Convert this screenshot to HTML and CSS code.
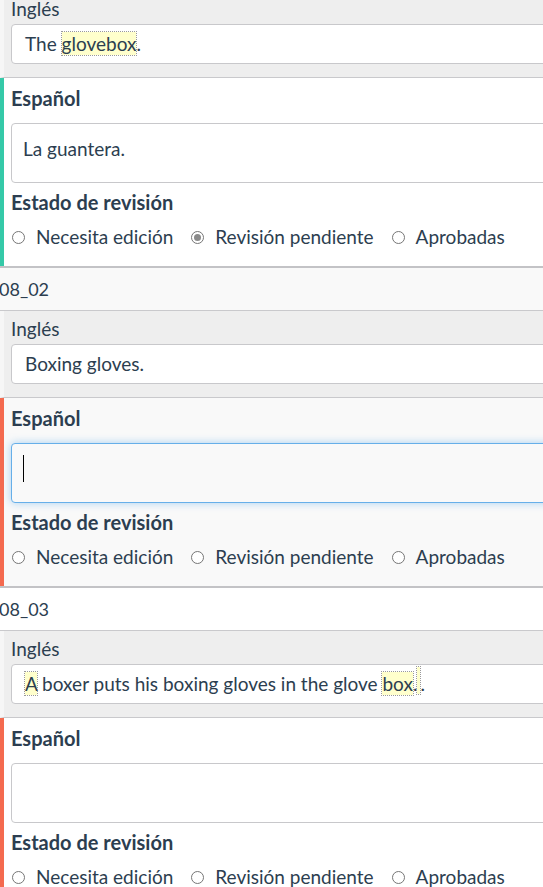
FILE: index.html
```html
<!DOCTYPE html>
<html lang="es">
<head>
<meta charset="utf-8">
<title>Revisión</title>
<link rel="stylesheet" href="styles.css">
</head>
<body>
<div class="list">
  <section class="seg">
    <div class="seg-head">08_01</div>
    <div class="src">
      <div class="lbl">Inglés</div>
      <div class="box">The <span class="hl">glovebox</span>.</div>
    </div>
    <div class="tgt ok">
      <div class="lbl b">Español</div>
      <div class="ta">La guantera.</div>
      <div class="lbl b est">Estado de revisión</div>
      <div class="radios">
        <span class="opt"><span class="rb"></span>Necesita edición</span>
        <span class="opt"><span class="rb on"></span>Revisión pendiente</span>
        <span class="opt"><span class="rb"></span>Aprobadas</span>
      </div>
    </div>
  </section>
  <section class="seg active">
    <div class="seg-head">08_02</div>
    <div class="src">
      <div class="lbl">Inglés</div>
      <div class="box">Boxing gloves.</div>
    </div>
    <div class="tgt bad">
      <div class="lbl b">Español</div>
      <div class="ta focus"><span class="caret"></span></div>
      <div class="lbl b est">Estado de revisión</div>
      <div class="radios">
        <span class="opt"><span class="rb"></span>Necesita edición</span>
        <span class="opt"><span class="rb"></span>Revisión pendiente</span>
        <span class="opt"><span class="rb"></span>Aprobadas</span>
      </div>
    </div>
  </section>
  <section class="seg">
    <div class="seg-head">08_03</div>
    <div class="src">
      <div class="lbl">Inglés</div>
      <div class="box"><span class="hl">A</span> boxer puts his boxing gloves in the glove <span class="hl">box</span>.<span class="hl dot">.</span>.</div>
    </div>
    <div class="tgt bad">
      <div class="lbl b">Español</div>
      <div class="ta"></div>
      <div class="lbl b est">Estado de revisión</div>
      <div class="radios">
        <span class="opt"><span class="rb"></span>Necesita edición</span>
        <span class="opt"><span class="rb"></span>Revisión pendiente</span>
        <span class="opt"><span class="rb"></span>Aprobadas</span>
      </div>
    </div>
  </section>
</div>
</body>
</html>
```

FILE: styles.css
```css
html, body {
  margin: 0;
  padding: 0;
  background: #ffffff;
  overflow: hidden;
}
body {
  font-family: "Lato", "Liberation Sans", sans-serif;
  font-size: 19px;
  color: #2c3e50;
}
.list {
  width: 640px;
  margin-top: -52px;
}
.seg {
  background: #ffffff;
  border-bottom: 2px solid #c3c3c6;
}
.seg.active {
  background: #f9f9f9;
}
.seg-head {
  height: 42px;
  line-height: 42px;
  font-size: 18px;
  text-indent: -1px;
  border-bottom: 1px solid #c9c9cc;
}
.src {
  background: #eeeeee;
  border-left: 4px solid #f6f6f6;
  border-bottom: 1px solid #c9c9cc;
  padding: 7px 0 13px 7px;
}
.lbl {
  line-height: 22px;
}
.lbl.b {
  font-weight: 700;
  font-size: 20px;
}
.box {
  margin-top: 4px;
  height: 38px;
  line-height: 38px;
  background: #ffffff;
  border: 1px solid #c8c8cb;
  border-radius: 4px;
  padding-left: 13px;
  white-space: nowrap;
}
.hl {
  background: #ffffcc;
  outline: 1px dotted #9a9a9a;
  outline-offset: 0;
}
.hl.dot {
  display: inline-block;
  width: 3px;
  overflow: hidden;
  line-height: 27px;
  vertical-align: -3px;
  color: transparent;
}
.tgt {
  border-left: 4px solid #35c9a8;
  padding: 9px 0 18px 7px;
}
.tgt.bad {
  border-left-color: #f46a4f;
}
.tgt .lbl.b:first-child {
  margin-bottom: 14px;
}
.ta {
  height: 43px;
  padding: 14px 11px 1px;
  line-height: 22px;
  background: #ffffff;
  border: 1px solid #c8c8cb;
  border-radius: 4px;
}
.ta.focus {
  background: #f9f9f9;
  border-color: #66afe9;
  box-shadow: 0 0 8px rgba(102, 175, 233, 0.55);
}
.caret {
  display: block;
  width: 1px;
  height: 27px;
  margin-top: -3px;
  background: #000000;
}
.est {
  margin-top: 8px;
}
.radios {
  margin-top: 13px;
  display: flex;
  gap: 18px;
  line-height: 22px;
  padding-left: 1px;
}
.opt {
  display: flex;
  align-items: center;
  gap: 11px;
  white-space: nowrap;
}
.rb {
  box-sizing: border-box;
  width: 13px;
  height: 13px;
  border-radius: 50%;
  border: 1px solid #767676;
  background: #ffffff;
  position: relative;
}
.rb.on::after {
  content: "";
  position: absolute;
  left: 2px;
  top: 2px;
  width: 7px;
  height: 7px;
  border-radius: 50%;
  background: #8a8a8a;
}
```
